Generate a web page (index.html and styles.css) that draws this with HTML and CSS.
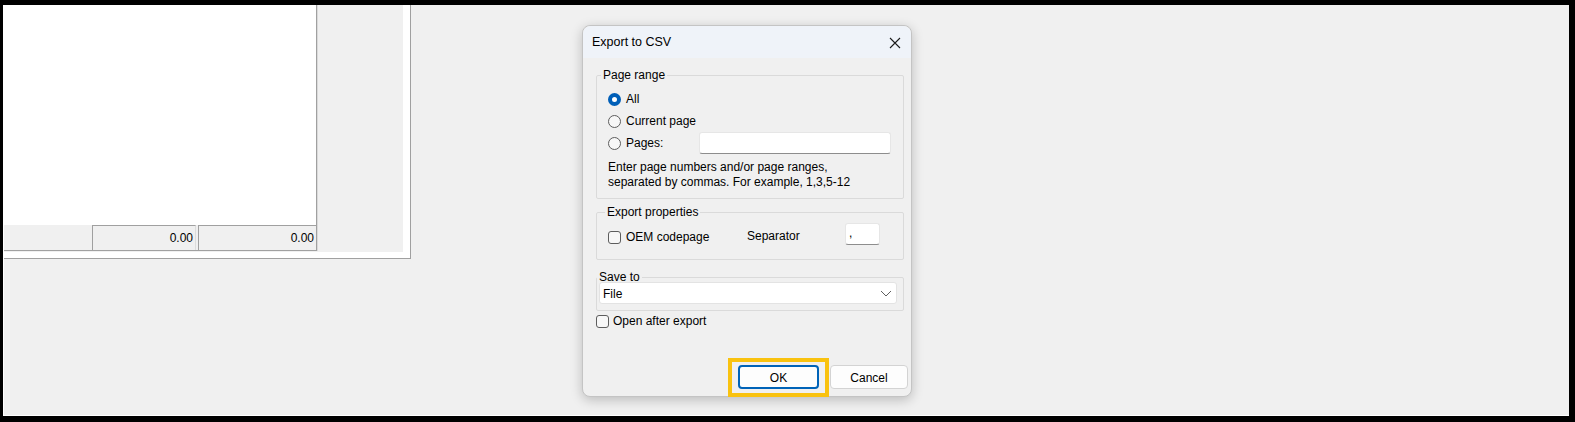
FILE: index.html
```html
<!DOCTYPE html>
<html lang="en">
<head>
<meta charset="utf-8">
<title>Export to CSV</title>
<link rel="stylesheet" href="styles.css">
</head>
<body>
<div class="screen">
  <div class="panel">
    <div class="panel-inner">
      <div class="report">
        <div class="report-page"></div>
        <div class="report-footer">
          <div class="cell cell-a">0.00</div>
          <div class="cell cell-b">0.00</div>
        </div>
      </div>
    </div>
  </div>
</div>

<div class="dialog">
  <div class="titlebar">
    <span class="title">Export to CSV</span>
    <svg class="close" width="12" height="12" viewBox="0 0 12 12"><path d="M1 1 L11 11 M11 1 L1 11" stroke="#1b1b1b" stroke-width="1.1" fill="none"/></svg>
  </div>
  <div class="dlg-body">
    <fieldset class="grp grp-range">
      <legend>Page range</legend>
      <div class="opt"><span class="radio checked"></span><span>All</span></div>
      <div class="opt"><span class="radio"></span><span>Current page</span></div>
      <div class="opt"><span class="opt-lbl"><span class="radio"></span><span>Pages:</span></span><span class="field pages-field"></span></div>
      <p class="hint">Enter page numbers and/or page ranges,<br>separated by commas. For example, 1,3,5-12</p>
    </fieldset>
    <fieldset class="grp grp-props">
      <legend>Export properties</legend>
      <div class="props-row">
        <span class="opt-lbl props-lbl"><span class="check"></span><span>OEM codepage</span></span>
        <span class="sep-lbl">Separator</span>
        <span class="field sep-field">,</span>
      </div>
    </fieldset>
    <fieldset class="grp grp-save">
      <legend>Save to</legend>
      <div class="select">
        <span class="select-val">File</span>
        <svg class="chev" width="12" height="7" viewBox="0 0 12 7"><path d="M1 1 L6 6 L11 1" stroke="#5f5f5f" stroke-width="1" fill="none"/></svg>
      </div>
    </fieldset>
    <div class="open-row"><span class="check"></span><span>Open after export</span></div>
  </div>
  <div class="buttons">
    <button class="btn btn-ok">OK</button>
    <button class="btn btn-cancel">Cancel</button>
  </div>
  <div class="highlight"></div>
</div>
</body>
</html>
```

FILE: styles.css
```css
html, body {
  margin: 0;
  padding: 0;
  background: #000;
}
body {
  position: relative;
  width: 1575px;
  height: 422px;
  overflow: hidden;
  font-family: "Liberation Sans", Arial, sans-serif;
  font-size: 12px;
  color: #000;
}
.screen {
  margin: 5px 6px 6px 3px;
  height: 410px;
  border-left: 1px solid #fff;
  border-bottom: 1px solid #fff;
  background: #f0f0f0;
}
.panel {
  box-sizing: content-box;
  width: 399px;
  height: 247px;
  padding: 0 7px 6px 0;
  background: #fff;
  border-right: 1px solid #a0a0a0;
  border-bottom: 1px solid #a0a0a0;
  display: flex;
}
.panel-inner {
  flex: 1;
  background: #f0f0f0;
  display: flex;
  align-items: flex-start;
}
.report {
  width: 312px;
  height: 245px;
  border-right: 1px solid #a0a0a0;
  border-bottom: 1px solid #a0a0a0;
  box-shadow: 1px 0 0 #dadada;
  display: flex;
  flex-direction: column;
}
.report-page {
  height: 220px;
  background: #fff;
}
.report-footer {
  flex: 1;
  background: #f0f0f0;
  display: flex;
  gap: 2px;
  padding-left: 88px;
}
.cell {
  box-sizing: border-box;
  height: 25px;
  border-top: 1px solid #a0a0a0;
  border-left: 1px solid #a0a0a0;
  border-right: 1px solid #dcdcdc;
  text-align: right;
  padding-right: 2px;
  line-height: 25px;
  font-size: 12px;
}
.cell-a { width: 104px; }
.cell-b { flex: 1; border-right: none; }

/* Dialog */
.dialog {
  position: absolute;
  left: 582px;
  top: 25px;
  width: 330px;
  height: 372px;
  box-sizing: border-box;
  border: 1px solid #c4c4c4;
  border-radius: 8px;
  background: #f0f0f0;
  box-shadow: 0 3px 12px rgba(0, 0, 0, 0.22);
  display: flex;
  flex-direction: column;
}
.titlebar {
  height: 32px;
  background: #eff3f9;
  border-radius: 8px 8px 0 0;
  display: flex;
  align-items: center;
  justify-content: space-between;
  padding: 0 10px 0 9px;
}
.title {
  font-size: 12.5px;
}
.close {
  display: block;
  margin-top: 1px;
}
.dlg-body {
  flex: 1;
  padding: 10px 7px 0 13px;
  line-height: 15px;
}
.grp {
  margin: 0;
  border: 1px solid #dadada;
  border-radius: 2px;
  min-inline-size: 0;
}
.grp legend {
  padding: 0 2px;
  line-height: 15px;
  font-size: 12px;
}
.grp-range {
  padding: 5px 11px 8px 11px;
}
.grp-range legend { margin-left: -7px; }
.opt {
  height: 22px;
  display: flex;
  align-items: center;
}
.opt-lbl {
  display: flex;
  align-items: center;
  width: 91px;
}
.radio {
  box-sizing: border-box;
  width: 13px;
  height: 13px;
  border: 1px solid #5d5d5d;
  border-radius: 50%;
  background: #f7f7f7;
  margin-right: 5px;
  flex: none;
}
.radio.checked {
  border: 4px solid #005fb8;
  background: #fff;
}
.check {
  box-sizing: border-box;
  width: 13px;
  height: 13px;
  border: 1px solid #5d5d5d;
  border-radius: 3px;
  background: #f7f7f7;
  margin-right: 5px;
  flex: none;
}
.field {
  box-sizing: border-box;
  height: 22px;
  background: #fff;
  border: 1px solid #e6e6e6;
  border-bottom-color: #8d8d8d;
  border-radius: 3px;
}
.pages-field { width: 192px; }
.hint {
  margin: 6px 0 0 0;
  line-height: 15px;
}
.grp-props {
  margin-top: 6px;
  padding: 3px 11px 14px 11px;
}
.grp-props legend { margin-left: -3px; }
.props-row {
  display: flex;
  align-items: center;
  height: 22px;
}
.props-lbl { width: 139px; padding-top: 7px; }
.sep-lbl { width: 98px; padding-top: 4px; }
.sep-field {
  width: 35px;
  padding-left: 3px;
  line-height: 18px;
}
.grp-save {
  margin-top: 10px;
  padding: 0 6px 6px 2px;
}
.grp-save legend { margin-left: -2px; }
.select {
  box-sizing: border-box;
  margin-top: -3px;
  height: 22px;
  background: #fff;
  border: 1px solid #e3e3e3;
  border-radius: 3px;
  display: flex;
  align-items: center;
  justify-content: space-between;
  padding: 0 4px 0 3px;
}
.select-val { padding-top: 3px; }
.chev { display: block; }
.open-row {
  margin-top: 3px;
  height: 15px;
  display: flex;
  align-items: center;
}
.open-row .check { margin-right: 4px; }
.buttons {
  display: flex;
  justify-content: flex-end;
  gap: 11px;
  padding: 0 3px 7px 0;
}
.btn {
  box-sizing: border-box;
  height: 24px;
  font-family: "Liberation Sans", Arial, sans-serif;
  font-size: 12px;
  color: #000;
  background: #fdfdfd;
  border: 1px solid #d3d3d3;
  border-radius: 4px;
  padding: 2px 0 0 0;
}
.btn-ok {
  width: 81px;
  border: 2px solid #0063b8;
}
.btn-cancel {
  width: 78px;
}
.highlight {
  position: absolute;
  left: 145px;
  top: 332px;
  width: 101px;
  height: 39px;
  box-sizing: border-box;
  border: 4px solid #f9c20f;
}
```
